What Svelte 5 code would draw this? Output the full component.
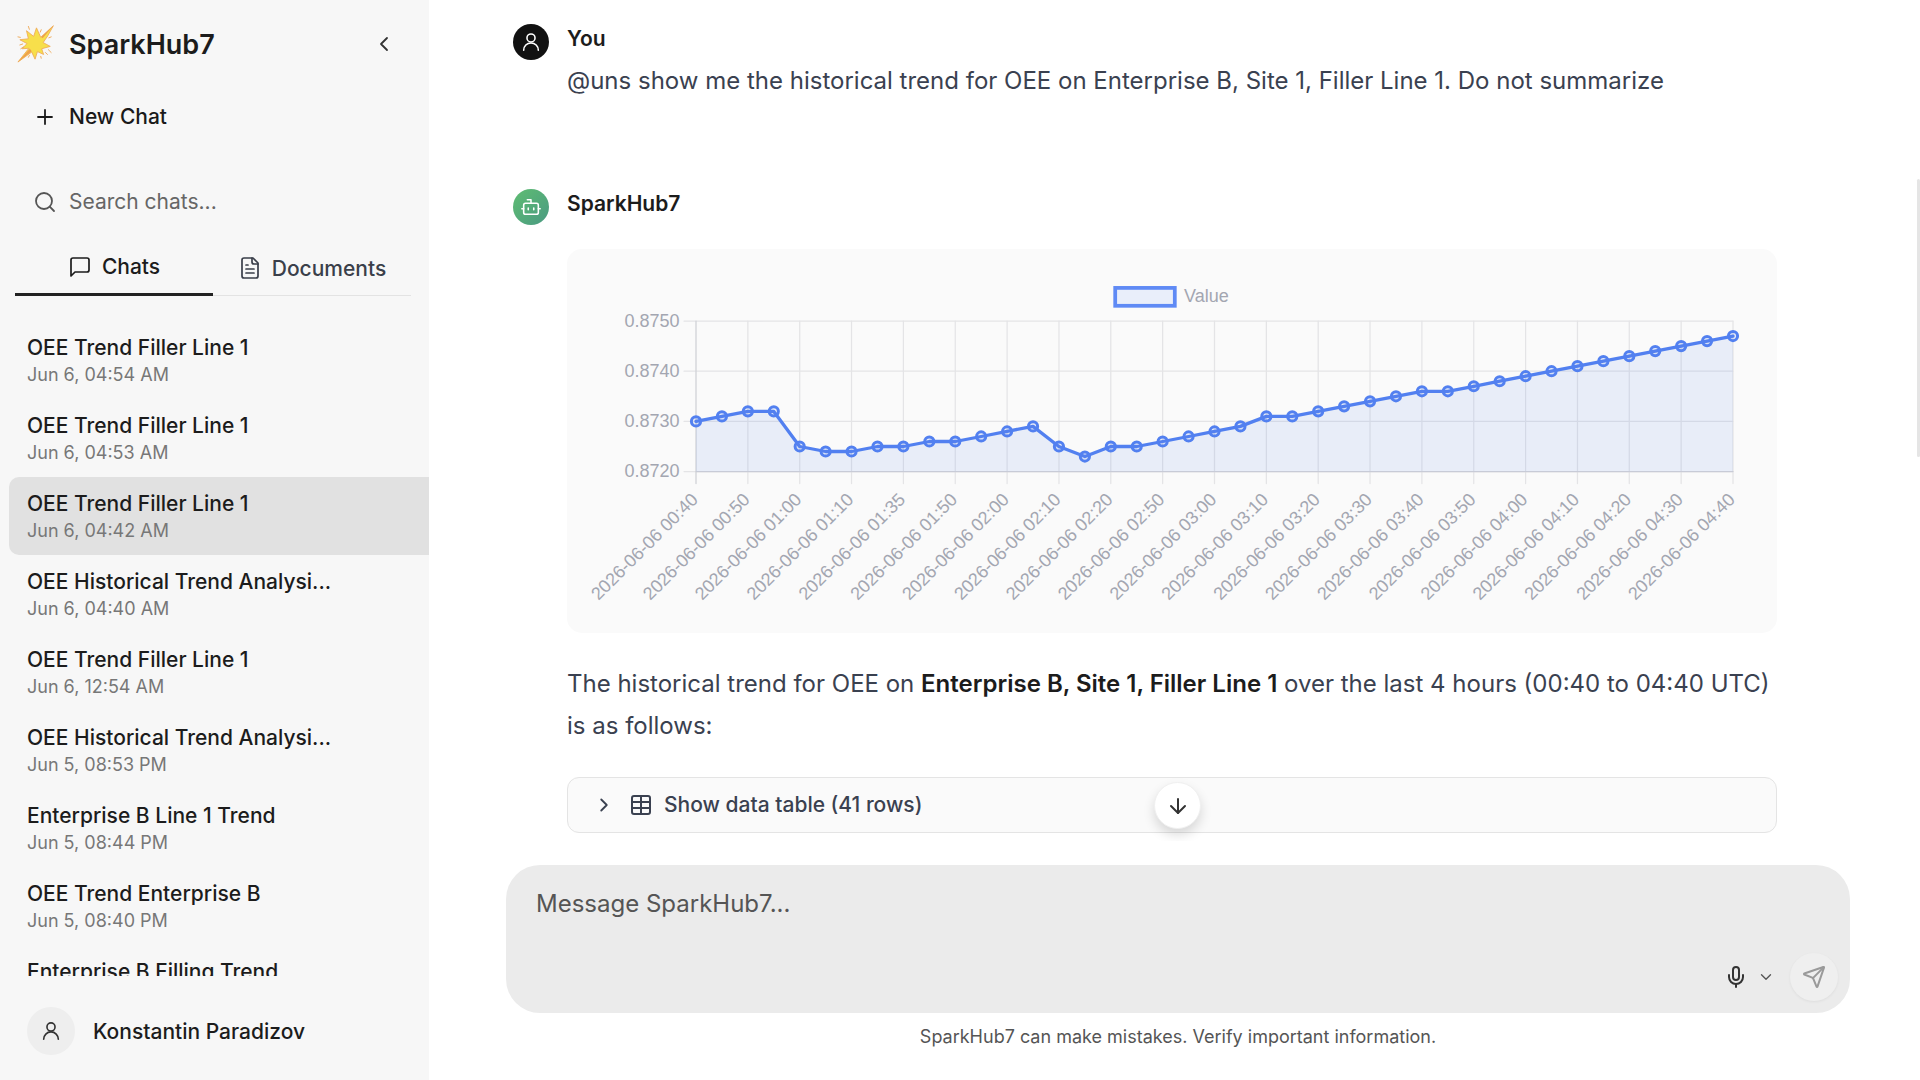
<script lang="ts">
	const chats = [
		{ title: "OEE Trend Filler Line 1", date: "Jun 6, 04:54 AM" },
		{ title: "OEE Trend Filler Line 1", date: "Jun 6, 04:53 AM" },
		{ title: "OEE Trend Filler Line 1", date: "Jun 6, 04:42 AM", active: true },
		{ title: "OEE Historical Trend Analysi...", date: "Jun 6, 04:40 AM" },
		{ title: "OEE Trend Filler Line 1", date: "Jun 6, 12:54 AM" },
		{ title: "OEE Historical Trend Analysi...", date: "Jun 5, 08:53 PM" },
		{ title: "Enterprise B Line 1 Trend", date: "Jun 5, 08:44 PM" },
		{ title: "OEE Trend Enterprise B", date: "Jun 5, 08:40 PM" },
		{ title: "Enterprise B Filling Trend", date: "Jun 5, 08:31 PM" },
	]

	const values = [
		30, 31, 32, 32, 25, 24, 24, 25, 25, 26, 26, 27, 28, 29, 25, 23, 25, 25, 26, 27, 28,
		29, 31, 31, 32, 33, 34, 35, 36, 36, 37, 38, 39, 40, 41, 42, 43, 44, 45, 46, 47,
	]
	const times = [
		"00:40", "00:50", "01:00", "01:10", "01:35", "01:50", "02:00", "02:10", "02:20", "02:50", "03:00",
		"03:10", "03:20", "03:30", "03:40", "03:50", "04:00", "04:10", "04:20", "04:30", "04:40",
	]
	const yTicks = ["0.8750", "0.8740", "0.8730", "0.8720"]

	// plot box, in card coordinates
	const left = 129
	const right = 1166
	const top = 72
	const bottom = 222.6
	const stepX = (right - left) / 40
	const px = (i: number) => left + i * stepX
	const py = (v: number) => bottom - ((v - 20) / 30) * (bottom - top)

	const line = values.map((v, i) => `${px(i).toFixed(1)},${py(v).toFixed(1)}`).join(" ")
	const area = `${left},${bottom} ${line} ${right},${bottom}`
</script>

<div class="app">
	<aside class="sidebar">
		<header class="brand">
			<svg class="logo" viewBox="0 0 40 40" aria-hidden="true">
				<path d="M38 1 L25 13 L20.5 3 L17.5 12 L10 6 L12 14.5 L3 15.5 L10.5 19.5 L5.5 25 L12.5 24.5 L1 39 L15.5 28.5 L19 36 L21.5 28 L28 31 L26 25 L35 22.5 L27.5 18.5 L32 12 Z" fill="#f7df4b" stroke="#eeaa58" stroke-width="0.9" stroke-linejoin="round"/>
				<path d="M38 1 L27 14 L25.5 12.5 Z M1 39 L13.5 25 L15.5 27.5 Z" fill="#ee9f4c" stroke="none"/>
				<g stroke="#eeaa58" stroke-width="1" stroke-linecap="round" fill="none">
					<path d="M12 1.5 L13 4.5"/><path d="M25.5 5 L24.5 7.5"/><path d="M1 12.5 L3.5 13"/><path d="M36 12.5 L33.5 13.5"/>
					<path d="M3 21 L6 20"/><path d="M4 25 L7 23"/><path d="M33 26 L36 29"/><path d="M30 29 L32 31"/>
					<path d="M12 34 L13 32"/><path d="M25 33 L25.5 35"/>
				</g>
			</svg>
			<span class="brand-name">SparkHub7</span>
			<svg class="collapse" viewBox="0 0 24 24" aria-hidden="true"><path d="m15 18-6-6 6-6"/></svg>
		</header>

		<button class="new-chat">
			<svg class="icon" viewBox="0 0 24 24" aria-hidden="true"><path d="M5 12h14"/><path d="M12 5v14"/></svg>
			New Chat
		</button>

		<div class="search">
			<svg class="icon" viewBox="0 0 24 24" aria-hidden="true"><circle cx="11" cy="11" r="8"/><path d="m21 21-4.3-4.3"/></svg>
			<span>Search chats...</span>
		</div>

		<nav class="tabs">
			<div class="tab selected">
				<svg class="tab-icon" viewBox="0 0 24 24" aria-hidden="true"><path d="M21 15a2 2 0 0 1-2 2H7l-4 4V5a2 2 0 0 1 2-2h14a2 2 0 0 1 2 2z"/></svg>
				Chats
			</div>
			<div class="tab">
				<svg class="tab-icon" viewBox="0 0 24 24" aria-hidden="true"><path d="M15 2H6a2 2 0 0 0-2 2v16a2 2 0 0 0 2 2h12a2 2 0 0 0 2-2V7Z"/><path d="M14 2v4a2 2 0 0 0 2 2h4"/><path d="M10 9H8"/><path d="M16 13H8"/><path d="M16 17H8"/></svg>
				Documents
			</div>
		</nav>

		<ul class="chat-list">
			{#each chats as chat}
				<li class="chat" class:active={chat.active}>
					<div class="chat-title">{chat.title}</div>
					<div class="chat-date">{chat.date}</div>
				</li>
			{/each}
		</ul>

		<footer class="user">
			<span class="user-avatar">
				<svg viewBox="0 0 24 24" aria-hidden="true"><circle cx="12" cy="7.6" r="4.4"/><path d="M20 21a8 8 0 0 0-16 0"/></svg>
			</span>
			Konstantin Paradizov
		</footer>
	</aside>

	<main class="main">
		<div class="messages">
			<section class="message question">
				<span class="avatar you">
					<svg viewBox="0 0 24 24" aria-hidden="true"><circle cx="12" cy="7.6" r="4.4"/><path d="M20 21a8 8 0 0 0-16 0"/></svg>
				</span>
				<div class="body">
					<div class="author">You</div>
					<p class="text">@uns show me the historical trend for OEE on Enterprise B, Site 1, Filler Line 1. Do not summarize</p>
				</div>
			</section>

			<section class="message">
				<span class="avatar bot">
					<svg viewBox="0 0 24 24" aria-hidden="true"><path d="M12 8V4H8"/><rect width="16" height="12" x="4" y="8" rx="2"/><path d="M2 14h2"/><path d="M20 14h2"/><path d="M15 13v2"/><path d="M9 13v2"/></svg>
				</span>
				<div class="body">
					<div class="author">SparkHub7</div>

					<div class="chart-card">
						<svg class="chart" viewBox="0 0 1210 384" aria-label="OEE trend">
							<rect class="legend-box" x="548.2" y="38.9" width="59.6" height="17.9"/>
							<text class="tick" x="617" y="53">Value</text>

							{#each yTicks as label, i}
								{@const y = top + (i * (bottom - top)) / 3}
								<line class="grid" x1={left - 12} x2={right} y1={y} y2={y}/>
								<text class="tick" x={left - 16.5} y={y + 5.5} text-anchor="end">{label}</text>
							{/each}
							{#each times as time, i}
								{@const x = px(i * 2)}
								<line class="grid" class:axis={i === 0} x1={x} x2={x} y1={top} y2={bottom + 12}/>
								<text class="tick" text-anchor="end" transform="translate({x + 3} {bottom + 29}) rotate(-45)">2026-06-06 {time}</text>
							{/each}
							<line class="grid axis" x1={left} x2={right} y1={bottom} y2={bottom}/>

							<polygon class="area" points={area}/>
							<polyline class="trend" points={line}/>
							{#each values as v, i}
								<circle class="point" cx={px(i)} cy={py(v)} r="4.6"/>
							{/each}
						</svg>
					</div>

					<p class="summary">The historical trend for OEE on <strong>Enterprise B, Site 1, Filler Line 1</strong> over the last 4 hours (00:40 to 04:40 UTC) is as follows:</p>

					<div class="table-toggle">
						<svg class="icon chevron" viewBox="0 0 24 24" aria-hidden="true"><path d="m9 18 6-6-6-6"/></svg>
						<svg class="icon grid-icon" viewBox="0 0 24 24" aria-hidden="true"><path d="M12 3v18"/><rect width="18" height="18" x="3" y="3" rx="2"/><path d="M3 9h18"/><path d="M3 15h18"/></svg>
						<span>Show data table (41 rows)</span>
					</div>
				</div>
			</section>

			<button class="scroll-down" aria-label="scroll to bottom">
				<svg class="icon" viewBox="0 0 24 24" aria-hidden="true"><path d="M12 5v14"/><path d="m19 12-7 7-7-7"/></svg>
			</button>
		</div>

		<div class="composer">
			<div class="placeholder">Message SparkHub7...</div>
			<div class="actions">
				<svg class="mic" viewBox="0 0 24 24" aria-hidden="true"><path d="M12 19v3"/><path d="M19 10v2a7 7 0 0 1-14 0v-2"/><rect x="9" y="2" width="6" height="13" rx="3"/></svg>
				<svg class="mic-menu" viewBox="0 0 24 24" aria-hidden="true"><path d="m6 9 6 6 6-6"/></svg>
				<button class="send" aria-label="send">
					<svg viewBox="0 0 24 24" aria-hidden="true"><path d="M14.536 21.686a.5.5 0 0 0 .937-.024l6.5-19a.496.496 0 0 0-.635-.635l-19 6.5a.5.5 0 0 0-.024.937l7.93 3.18a2 2 0 0 1 1.112 1.11z"/><path d="m21.854 2.147-10.94 10.939"/></svg>
				</button>
			</div>
		</div>
		<p class="disclaimer">SparkHub7 can make mistakes. Verify important information.</p>
		<div class="scrollbar"></div>
	</main>
</div>

<style>
	:global(body) {
		margin: 0;
		font-family: Inter, "Noto Sans", sans-serif;
		background: #fff;
	}

	svg {
		fill: none;
		stroke: currentColor;
		stroke-width: 2;
		stroke-linecap: round;
		stroke-linejoin: round;
		display: block;
		flex: none;
	}

	.app {
		display: flex;
		height: 1080px;
		overflow: hidden;
	}

	.sidebar {
		width: 429px;
		flex: none;
		background: #f7f7f7;
		display: flex;
		flex-direction: column;
		color: #1a1a1a;
	}

	.brand {
		height: 88px;
		display: flex;
		align-items: center;
		padding-left: 17px;
	}

	.logo {
		width: 38px;
		height: 40px;
		stroke-width: 1;
	}

	.brand-name {
		margin-left: 14px;
		padding-top: 2px;
		font-size: 27px;
		font-weight: 600;
		color: #1c1c1c;
	}

	.collapse {
		width: 24px;
		height: 24px;
		margin-left: auto;
		margin-right: 33px;
		color: #333;
		stroke-width: 1.8;
	}

	.icon {
		width: 24px;
		height: 24px;
	}

	.new-chat {
		height: 58px;
		margin: 0;
		padding: 0 0 0 33px;
		border: none;
		background: none;
		display: flex;
		align-items: center;
		gap: 12px;
		font: 500 21px Inter, sans-serif;
		color: #1a1a1a;
	}

	.new-chat .icon {
		stroke-width: 1.8;
	}

	.search {
		height: 58px;
		margin-top: 27px;
		padding-left: 33px;
		display: flex;
		align-items: center;
		gap: 12px;
		font-size: 21px;
		color: #666;
	}

	.search .icon {
		color: #555;
		stroke-width: 1.8;
	}

	.tabs {
		display: flex;
		margin: 10px 18px 0 15px;
		border-bottom: 1px solid #e3e3e3;
		height: 55px;
	}

	.tab {
		flex: 1;
		display: flex;
		align-items: center;
		justify-content: center;
		gap: 10px;
		font-size: 21px;
		font-weight: 500;
		color: #3a3f4a;
		margin-bottom: -1px;
		box-sizing: border-box;
	}

	.tab.selected {
		color: #1c1c1c;
		border-bottom: 3px solid #222;
	}

	.tab-icon {
		width: 24px;
		height: 24px;
		stroke-width: 1.7;
	}

	.chat-list {
		list-style: none;
		margin: 25px 0 0;
		padding: 0 0 0 9px;
		height: 655px;
		overflow: hidden;
		flex: none;
	}

	.chat {
		height: 78px;
		box-sizing: border-box;
		padding: 14px 0 0 18px;
	}

	.chat.active {
		background: #e1e1e1;
		border-radius: 10px 0 0 10px;
	}

	.chat-title {
		font-size: 21px;
		font-weight: 500;
		line-height: 26px;
		color: #1c1c1c;
	}

	.chat-date {
		font-size: 18px;
		line-height: 27px;
		color: #777;
	}

	.user {
		height: 104px;
		box-sizing: border-box;
		padding: 6px 0 0 27px;
		display: flex;
		align-items: center;
		gap: 18px;
		font-size: 21px;
		font-weight: 500;
		color: #1c1c1c;
	}

	.user-avatar {
		width: 48px;
		height: 48px;
		border-radius: 50%;
		background: #eee;
		display: grid;
		place-items: center;
		color: #333;
	}

	.user-avatar svg {
		width: 22px;
		height: 22px;
		stroke-width: 1.8;
	}

	.main {
		flex: 1;
		min-width: 0;
		position: relative;
		display: flex;
		flex-direction: column;
	}

	.messages {
		height: 841px;
		flex: none;
		box-sizing: border-box;
		padding: 24px 0 0 84px;
		overflow: hidden;
		position: relative;
	}

	.message {
		display: flex;
		gap: 18px;
	}

	.question {
		height: 165px;
	}

	.avatar {
		width: 36px;
		height: 36px;
		border-radius: 50%;
		flex: none;
		display: grid;
		place-items: center;
		color: #fff;
	}

	.avatar svg {
		width: 22px;
		height: 22px;
		stroke-width: 1.7;
	}

	.you {
		background: #111;
	}

	.bot {
		background: linear-gradient(135deg, #5fbd72, #4a9a82);
	}

	.body {
		width: 1210px;
	}

	.author {
		font-size: 21px;
		font-weight: 600;
		line-height: 30px;
		color: #1c1c1c;
	}

	.text,
	.summary {
		margin: 0;
		font-size: 24px;
		line-height: 42px;
		color: #3a4150;
	}

	.text {
		margin-top: 6px;
		white-space: nowrap;
	}

	.summary strong {
		font-weight: 600;
		color: #1c1c1c;
	}

	.chart-card {
		margin-top: 30px;
		height: 384px;
		border-radius: 15px;
		background: #fafafa;
	}

	.chart {
		width: 1210px;
		height: 384px;
	}

	.grid {
		stroke: #e4e4e6;
		stroke-width: 1.25;
	}

	.grid.axis {
		stroke: #cfd0d6;
		stroke-width: 1.25;
	}

	.tick {
		font-family: "Liberation Sans", Arial, sans-serif;
		font-size: 18px;
		fill: #a3a6b1;
		stroke: none;
	}

	.legend-box {
		fill: #e9eefa;
		stroke: #5f8af5;
		stroke-width: 3.75;
		stroke-linejoin: miter;
	}

	.area {
		fill: rgba(80, 125, 240, 0.1);
		stroke: none;
	}

	.trend {
		fill: none;
		stroke: #5280f0;
		stroke-width: 3.3;
	}

	.point {
		fill: rgba(90, 130, 240, 0.12);
		stroke: #5280f0;
		stroke-width: 3;
	}

	.summary {
		margin-top: 30px;
	}

	.table-toggle {
		margin-top: 30px;
		height: 56px;
		box-sizing: border-box;
		border: 1px solid #e4e4e4;
		border-radius: 12px;
		background: #fafafa;
		display: flex;
		align-items: center;
		padding: 0 0 1px 25px;
		font-size: 21px;
		font-weight: 500;
		color: #3a4150;
	}

	.chevron {
		width: 22px;
		height: 22px;
	}

	.grid-icon {
		margin-left: 14px;
		margin-right: 11px;
	}

	.scroll-down {
		position: absolute;
		left: 725px;
		top: 782px;
		width: 47px;
		height: 47px;
		padding: 0;
		border: 1px solid #f0f0f0;
		border-radius: 50%;
		background: #fff;
		box-shadow: 0 6px 12px rgba(0, 0, 0, 0.14);
		display: grid;
		place-items: center;
		color: #333;
	}

	.composer {
		position: relative;
		margin: 24px 70px 0 77px;
		height: 148px;
		flex: none;
		border-radius: 34px;
		background: #ebebeb;
	}

	.placeholder {
		padding: 24px 0 0 30px;
		font-size: 24px;
		line-height: 30px;
		color: #555;
	}

	.actions {
		position: absolute;
		right: 12px;
		bottom: 12px;
		display: flex;
		align-items: center;
	}

	.mic {
		width: 24px;
		height: 24px;
		color: #333;
	}

	.mic-menu {
		width: 18px;
		height: 18px;
		margin-left: 9px;
		margin-right: 15px;
		color: #555;
		stroke-width: 1.8;
	}

	.send {
		width: 48px;
		height: 48px;
		padding: 0;
		border: none;
		border-radius: 50%;
		background: #efefef;
		box-shadow: 0 1px 3px rgba(0, 0, 0, 0.06);
		display: grid;
		place-items: center;
		color: #9a9a9a;
	}

	.send svg {
		width: 24px;
		height: 24px;
	}

	.disclaimer {
		margin: 13px 0 0 77px;
		width: 1344px;
		text-align: center;
		font-size: 18px;
		line-height: 22px;
		color: #555;
	}

	.scrollbar {
		position: absolute;
		right: 0;
		top: 179px;
		width: 3px;
		height: 278px;
		border-radius: 2px;
		background: #e5e5e5;
	}
</style>
